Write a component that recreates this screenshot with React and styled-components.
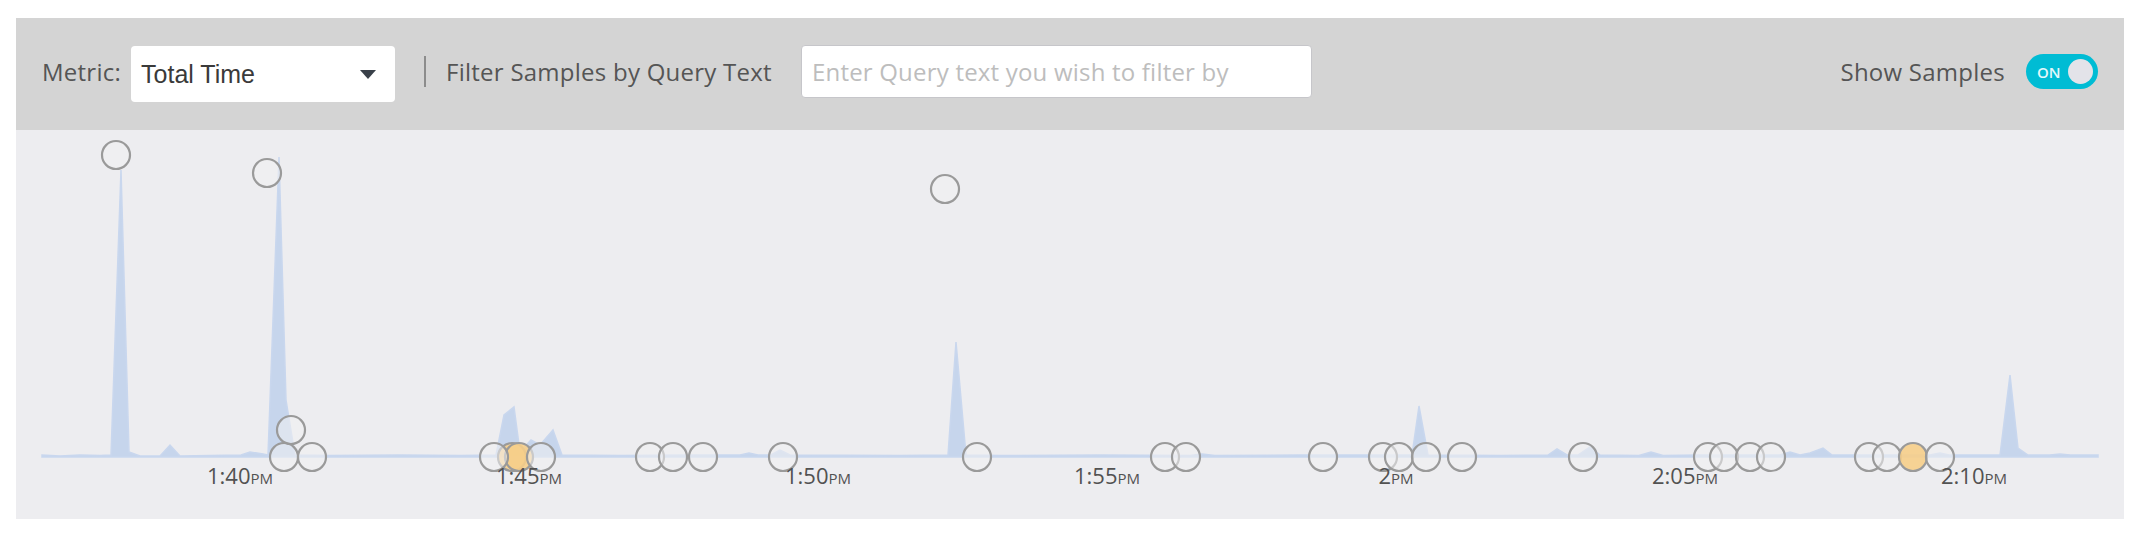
import styled, { createGlobalStyle } from 'styled-components';

const GlobalStyle = createGlobalStyle`
  body {
    margin: 0;
    background: #fff;
    font-family: "Open Sans", "Noto Sans", sans-serif;
  }
`;

// chart geometry (local to the chart svg)
const OX = 16;
const BASE = 327;

// [x, height above baseline] in page pixels
const AREA = [
  [42, 2], [60, 1], [80, 2], [100, 1.5], [111, 2], [121, 287], [129, 5], [140, 1],
  [160, 1], [170, 12], [180, 1], [241, 2], [250, 5], [263, 3], [268, 2], [279, 300],
  [286, 57], [295, 2], [330, 1.5], [400, 2], [460, 1.5], [496, 2], [504, 42], [514, 50],
  [520, 5], [531, 17], [540, 12], [553, 27], [562, 2], [620, 1.5], [700, 2], [740, 2],
  [749, 4], [758, 2], [771, 2], [780, 7], [790, 2], [900, 1.5], [948, 2], [956, 115],
  [966, 2], [1000, 1.5], [1100, 2], [1190, 1.5], [1202, 3], [1215, 1.5], [1300, 2],
  [1412, 2], [1419, 51], [1428, 2], [1500, 1.5], [1548, 2], [1557, 8], [1567, 2],
  [1578, 2], [1590, 10], [1600, 2], [1639, 1.5], [1651, 5], [1663, 1.5], [1700, 2],
  [1780, 2], [1790, 5], [1800, 2], [1810, 4], [1823, 9], [1832, 2], [1880, 2],
  [1930, 2], [1940, 4], [1949, 2], [2000, 2], [2010, 82], [2018, 9], [2028, 2],
  [2050, 2], [2060, 3], [2070, 2], [2098, 2],
];

const areaPath = () => {
  const first = AREA[0][0] - OX;
  const last = AREA[AREA.length - 1][0] - OX;
  const top = AREA.map(([x, h]) => `L${x - OX},${BASE - h}`).join(' ');
  return `M${first},${BASE} ${top} L${last},${BASE} Z`;
};

// samples: [x, y, highlighted]
const SAMPLES = [
  [116, 155], [267, 173], [945, 189],
  [284, 457], [312, 457], [291, 430],
  [512, 457, true], [519, 457, true], [494, 457], [541, 457],
  [650, 457], [673, 457], [703, 457], [783, 457], [977, 457],
  [1165, 457], [1186, 457], [1323, 457], [1383, 457], [1399, 457],
  [1426, 457], [1462, 457], [1583, 457], [1708, 457], [1724, 457],
  [1750, 457], [1771, 457], [1869, 457], [1887, 457], [1913, 457, true], [1940, 457],
];

const TICKS = [
  [240, '1:40'], [529, '1:45'], [818, '1:50'], [1107, '1:55'],
  [1396, '2'], [1685, '2:05'], [1974, '2:10'],
];

export default function App() {
  return (
    <>
      <GlobalStyle />
      <Page>
        <Toolbar>
          <Label>Metric:</Label>
          <Select>
            <SelectValue>Total Time</SelectValue>
            <Caret />
          </Select>
          <Divider />
          <Label>Filter Samples by Query Text</Label>
          <QueryInput placeholder='Enter Query text you wish to filter by' />
          <Spacer />
          <Label>Show Samples</Label>
          <Toggle>
            <ToggleText>ON</ToggleText>
            <Knob />
          </Toggle>
        </Toolbar>
        <Chart>
          <svg width='2108' height='389'>
            <path d={areaPath()} fill='#c6d5ec' stroke='#c9d7ee' strokeWidth='1.5' />
            {SAMPLES.map(([x, y, hot], i) => (
              <circle
                key={i}
                cx={x - OX}
                cy={y - 130}
                r='14'
                fill={hot ? 'rgba(246, 206, 138, 0.9)' : 'rgba(240, 240, 243, 0.55)'}
                stroke='#9a9a9a'
                strokeWidth='2.2'
              />
            ))}
            {TICKS.map(([x, t]) => (
              <TickLabel key={t} x={x - OX} y='354' textAnchor='middle'>
                {t}
                <tspan fontSize='15'>PM</tspan>
              </TickLabel>
            ))}
          </svg>
        </Chart>
      </Page>
    </>
  );
}

const Page = styled.div`
  padding: 18px 12px 15px 16px;
`;

const Toolbar = styled.div`
  display: flex;
  align-items: center;
  height: 112px;
  box-sizing: border-box;
  padding: 0 26px 5px 26px;
  background-color: #d4d4d4;
`;

const Label = styled.span`
  font-size: 24px;
  letter-spacing: 0.25px;
  color: #555;
  white-space: nowrap;
`;

const Select = styled.div`
  display: flex;
  align-items: center;
  justify-content: space-between;
  box-sizing: border-box;
  width: 264px;
  height: 56px;
  margin: 5px 0 0 10px;
  padding: 0 19px 0 10px;
  background-color: #fff;
  border-radius: 4px;
`;

const SelectValue = styled.span`
  font-family: "Liberation Sans", Arial, sans-serif;
  font-size: 25px;
  color: #3a3a3a;
`;

const Caret = styled.span`
  width: 0;
  height: 0;
  border-left: 8px solid transparent;
  border-right: 8px solid transparent;
  border-top: 9px solid #394049;
`;

const Divider = styled.span`
  width: 2px;
  height: 31px;
  margin: 0 20px 0 29px;
  background-color: #8c8c8c;
`;

const QueryInput = styled.input`
  box-sizing: border-box;
  width: 511px;
  height: 53px;
  margin-left: 29px;
  padding: 0 10px;
  border: 1px solid #c6c6ca;
  border-radius: 4px;
  background-color: #fff;
  font-family: "Open Sans", sans-serif;
  font-size: 24px;
  letter-spacing: 0.2px;
  color: #333;
  outline: none;
  &::placeholder {
    color: #bdbdbd;
  }
`;

const Spacer = styled.div`
  flex: 1;
`;

const Toggle = styled.div`
  display: flex;
  align-items: center;
  justify-content: space-between;
  box-sizing: border-box;
  width: 72px;
  height: 35px;
  margin-left: 21px;
  padding: 0 5px 0 11px;
  border-radius: 18px;
  background-color: #00bcd4;
`;

const ToggleText = styled.span`
  font-size: 15px;
  font-weight: 600;
  color: #e3f8fb;
`;

const Knob = styled.span`
  width: 25px;
  height: 25px;
  border-radius: 50%;
  background-color: #e3e3e9;
`;

const Chart = styled.div`
  height: 389px;
  background-color: #ededf0;
  svg {
    display: block;
  }
`;

const TickLabel = styled.text`
  font-family: "Open Sans", sans-serif;
  font-size: 22px;
  fill: #525252;
`;
